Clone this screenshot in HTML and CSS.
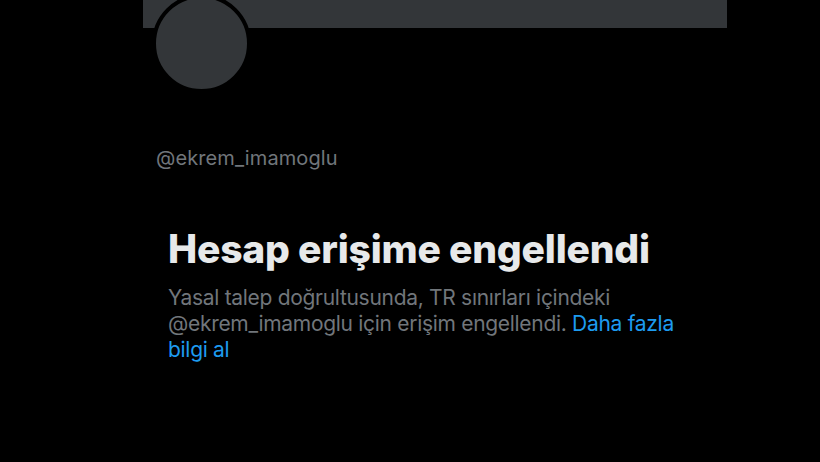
FILE: index.html
```html
<!DOCTYPE html>
<html lang="tr">
<head>
<meta charset="utf-8">
<link rel="stylesheet" href="styles.css">
</head>
<body>
<div class="profile">
  <div class="banner"></div>
  <div class="avatar"></div>
  <div class="handle">@ekrem_imamoglu</div>
  <div class="notice">
    <h1 class="title">Hesap erişime engellendi</h1>
    <p class="desc">Yasal talep doğrultusunda, TR sınırları içindeki @ekrem_imamoglu için erişim engellendi. <a class="link" href="#">Daha fazla bilgi al</a></p>
  </div>
</div>
</body>
</html>
```
FILE: styles.css
```css
html, body {
  margin: 0;
  padding: 0;
  background: #000;
  width: 820px;
  height: 462px;
  overflow: hidden;
}
body {
  font-family: Inter, "Noto Sans", "Liberation Sans", sans-serif;
}
.profile {
  margin-left: 143px;
  width: 584px;
}
.banner {
  height: 28px;
  background: #333639;
}
.avatar {
  width: 91px;
  height: 91px;
  border-radius: 50%;
  background: #333639;
  border: 4px solid #000;
  margin-top: -34px;
  margin-left: 9px;
}
.handle {
  margin-top: 53px;
  margin-left: 13px;
  color: #71767b;
  font-size: 20px;
  line-height: 24px;
  letter-spacing: 0.1px;
}
.notice {
  margin-left: 25px;
  margin-top: 56px;
  width: 520px;
}
.title {
  margin: 0;
  color: #e7e9ea;
  font-size: 39px;
  font-weight: 800;
  line-height: 46px;
  letter-spacing: -0.2px;
}
.desc {
  margin: 13px 0 0;
  color: #71767b;
  font-size: 21px;
  line-height: 26px;
  letter-spacing: -0.3px;
}
.link {
  color: #1d9bf0;
  text-decoration: none;
}
```
